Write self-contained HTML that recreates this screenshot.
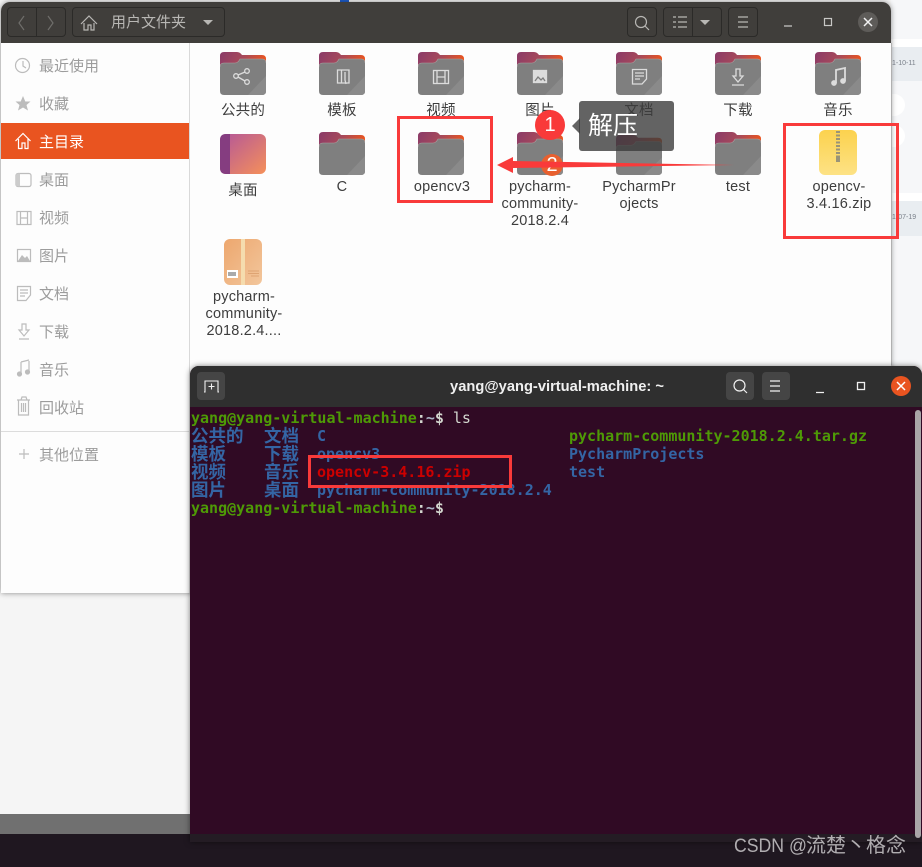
<!DOCTYPE html>
<html lang="zh"><head><meta charset="utf-8"><title>解压</title>
<style>
*{box-sizing:border-box}
html,body{margin:0;padding:0;width:922px;height:867px;overflow:hidden;background:#f5f5f5;font-family:"Liberation Sans","Noto Sans CJK SC",sans-serif}
.a{position:absolute}
#fm{left:1px;top:2px;width:890px;height:591px;background:#fdfdfd;border-radius:9px 9px 0 0;overflow:hidden;box-shadow:0 0 6px rgba(0,0,0,.45)}
.side{font-size:15px;color:#9c9c9c;left:38px;line-height:20px;white-space:nowrap}
.lab{font-size:14.5px;color:#3d3d3d;line-height:17px;text-align:center;width:96px;letter-spacing:.2px}
.term{font:bold 15px/18px "DejaVu Sans Mono","Noto Sans CJK SC",monospace;white-space:pre;position:absolute}
.cjk{font:bold 17.5px/18px "Noto Sans CJK SC",sans-serif;color:#3465a4;position:absolute;white-space:nowrap}
svg{position:absolute;overflow:visible}
</style></head><body>
<svg width="0" height="0" style="left:0;top:0"><defs>
<linearGradient id="fg" x1="0" y1="0" x2="1" y2="0.25"><stop offset="0" stop-color="#8a3a68"/><stop offset=".55" stop-color="#a84a5a"/><stop offset="1" stop-color="#e95420"/></linearGradient>
<linearGradient id="dg" x1="0" y1="0" x2="1" y2="1"><stop offset="0" stop-color="#b2559a"/><stop offset="1" stop-color="#f5905a"/></linearGradient>
<linearGradient id="zg" x1="0" y1="0" x2="0" y2="1"><stop offset="0" stop-color="#fcd24e"/><stop offset="1" stop-color="#fde285"/></linearGradient>
<linearGradient id="pg" x1="0" y1="0" x2="1" y2="1"><stop offset="0" stop-color="#eda76e"/><stop offset="1" stop-color="#f2c69c"/></linearGradient>
<symbol id="folder" viewBox="0 0 46 43">
<path d="M4 0H17Q20 0 22 3H42Q46 3 46 7V20H0V4Q0 0 4 0Z" fill="url(#fg)"/>
<path d="M0 15Q0 11 4 11H15Q18 11 20 7H42Q46 7 46 11V39Q46 43 42 43H4Q0 43 0 39Z" fill="#7f7f7f"/>
<path d="M46 24V39Q46 43 42 43H28Z" fill="#8a8a8a"/>
<path d="M0 15Q0 11 4 11H15Q18 11 20 7H42Q46 7 46 11" fill="none" stroke="#a8a2a2" stroke-width=".6"/>
</symbol></defs></svg>

<!-- background page strip -->
<div class="a" style="left:891px;top:0;width:31px;height:365px;background:#f6f7f9"></div>
<div class="a" style="left:891px;top:39px;width:31px;height:8px;background:#fff"></div>
<div class="a" style="left:891px;top:47px;width:31px;height:34px;background:#e9edf1"></div>
<div class="a" style="left:891px;top:193px;width:31px;height:8px;background:#fff"></div>
<div class="a" style="left:891px;top:201px;width:31px;height:35px;background:#e9edf1"></div>
<div class="a" style="left:892px;top:59px;font-size:7px;color:#7a808a;line-height:10px">1-10-11</div>
<div class="a" style="left:892px;top:213px;font-size:7px;color:#7a808a;line-height:10px">1-07-19</div>
<div class="a" style="left:891px;top:94px;width:14px;height:22px;background:#fff;border-radius:0 11px 11px 0"></div>
<div class="a" style="left:891px;top:125px;width:14px;height:22px;background:#fff;border-radius:0 11px 11px 0"></div>
<div class="a" style="left:340px;top:0;width:9px;height:3px;background:#1f5fd0"></div>
<div class="a" style="left:0;top:814px;width:922px;height:20px;background:#707070"></div>
<div class="a" style="left:0;top:834px;width:922px;height:33px;background:#1f1720"></div>

<!-- file manager -->
<div class="a" id="fm">
 <div class="a" style="left:0;top:0;width:890px;height:41px;background:#403e3b"></div>
 <div class="a" style="left:6px;top:5px;width:59px;height:30px;border:1px solid #2b2a28;border-radius:4px"></div>
 <div class="a" style="left:35px;top:5px;width:1px;height:30px;background:#2b2a28"></div>
 <svg style="left:0;top:0" width="890" height="41" fill="none" stroke="#8a8986" stroke-width="1.2">
  <path d="M23 14L18 21L23 28M47 14L52 21L47 28" stroke="#6f6e6b"/>
  <path d="M80 22L88 14L96 22M83 21V28H87V23H90V28H93V21" stroke="#b8b7b4"/>
  <path d="M202 18H212L207 23Z" fill="#b8b7b4" stroke="none"/>
  <circle cx="640" cy="20" r="5.5" stroke="#b8b7b4"/><path d="M644 24L648 28" stroke="#b8b7b4"/>
  <path d="M672 15H675M672 20H675M672 25H675M677 15H686M677 20H686M677 25H686" stroke="#b8b7b4"/>
  <path d="M699 18H709L704 23Z" fill="#b8b7b4" stroke="none"/>
  <path d="M737 15H747M737 20H747M737 25H747" stroke="#b8b7b4"/>
  <path d="M783 24H791" stroke="#c8c8c6"/>
  <rect x="823.5" y="16.5" width="7" height="7" stroke="#c8c8c6"/>
 </svg>
 <div class="a" style="left:71px;top:5px;width:153px;height:30px;border:1px solid #2b2a28;border-radius:4px"></div>
 <div class="a" style="left:110px;top:11px;font-size:15px;line-height:20px;color:#b8b7b4">用户文件夹</div>
 <div class="a" style="left:626px;top:5px;width:30px;height:30px;border:1px solid #2b2a28;border-radius:4px"></div>
 <div class="a" style="left:662px;top:5px;width:59px;height:30px;border:1px solid #2b2a28;border-radius:4px"></div>
 <div class="a" style="left:691px;top:5px;width:1px;height:30px;background:#2b2a28"></div>
 <div class="a" style="left:727px;top:5px;width:30px;height:30px;border:1px solid #2b2a28;border-radius:4px"></div>
 <div class="a" style="left:857px;top:10px;width:20px;height:20px;border-radius:50%;background:#5e5c59"></div>
 <svg style="left:857px;top:10px" width="20" height="20"><path d="M6 6L14 14M14 6L6 14" stroke="#f2f2f2" stroke-width="1.5"/></svg>

 <!-- sidebar -->
 <div class="a" style="left:188px;top:41px;width:1px;height:550px;background:#d9d9d9"></div>
 <div class="a" style="left:0;top:121px;width:188px;height:36px;background:#e95420"></div>
 <div class="a" style="left:0;top:429px;width:188px;height:1px;background:#dcdcdc"></div>
 <div class="a side" style="top:55px">最近使用</div>
 <div class="a side" style="top:93px">收藏</div>
 <div class="a side" style="top:131px;color:#fff">主目录</div>
 <div class="a side" style="top:169px">桌面</div>
 <div class="a side" style="top:207px">视频</div>
 <div class="a side" style="top:245px">图片</div>
 <div class="a side" style="top:283px">文档</div>
 <div class="a side" style="top:321px">下载</div>
 <div class="a side" style="top:359px">音乐</div>
 <div class="a side" style="top:397px">回收站</div>
 <div class="a side" style="top:444px">其他位置</div>
 <svg style="left:0;top:0" width="190" height="470" fill="none" stroke="#bcbcbc" stroke-width="1.2">
  <circle cx="21.500" cy="63.500" r="7"/><path d="M22 59V64L25 66"/>
  <path d="M22 94L24.300 99.500H29.500L25.500 103L27 108.500L22 105.500L17 108.500L18.500 103L14.500 99.500H19.700Z" fill="#bcbcbc" stroke="none"/>
  <path d="M14.500 139L22 131.500L29.500 139M17.500 137V146.500H21V141H24V146.500H27V137" stroke="#fff"/>
  <rect x="15" y="171.500" width="15" height="13" rx="2"/><path d="M15 173.500V183Q15 184.500 17 184.500H19V171.500H17Q15 171.500 15 173.500Z" fill="#ccc" stroke="none"/>
  <rect x="16" y="209.500" width="14" height="13"/><path d="M19.500 210V222M26.500 210V222M20 216H26"/>
  <rect x="16.500" y="247.500" width="13" height="12"/><path d="M17 259L21 253L24 256L26 254L29 259" fill="#bcbcbc" stroke="none"/>
  <path d="M16.500 284.500H29.500V293L25 298.500H16.500ZM19 288H27M19 291H27M19 294H24"/>
  <path d="M21 322H25V328H28L23 334L18 328H21ZM18 337H28"/>
  <path d="M20 360V372M28 359V370M20 360L28 358"/><circle cx="18.500" cy="372" r="2" fill="#bcbcbc"/><circle cx="26.500" cy="370" r="2" fill="#bcbcbc"/>
  <path d="M16 398H29M20 398L21 395H25L26 398M17.500 398V413H27.500V398M20.500 401V410M22.500 401V410M24.500 401V410"/>
  <path d="M23 447V457M18 452H28"/>
 </svg>
</div>
<div class="a" style="left:891px;top:43px;width:1px;height:322px;background:#b0b0b0"></div>

<!-- folders -->
<svg style="left:220px;top:52px" width="46" height="43"><use href="#folder"/></svg>
<svg style="left:319px;top:52px" width="46" height="43"><use href="#folder"/></svg>
<svg style="left:418px;top:52px" width="46" height="43"><use href="#folder"/></svg>
<svg style="left:517px;top:52px" width="46" height="43"><use href="#folder"/></svg>
<svg style="left:616px;top:52px" width="46" height="43"><use href="#folder"/></svg>
<svg style="left:715px;top:52px" width="46" height="43"><use href="#folder"/></svg>
<svg style="left:815px;top:52px" width="46" height="43"><use href="#folder"/></svg>
<svg style="left:319px;top:132px" width="46" height="43"><use href="#folder"/></svg>
<svg style="left:418px;top:132px" width="46" height="43"><use href="#folder"/></svg>
<svg style="left:517px;top:132px" width="46" height="43"><use href="#folder"/></svg>
<svg style="left:616px;top:135px" width="46" height="40" preserveAspectRatio="none" viewBox="0 0 46 43"><use href="#folder" width="46" height="43"/></svg>
<svg style="left:715px;top:132px" width="46" height="43"><use href="#folder"/></svg>
<!-- folder glyphs -->
<svg style="left:0;top:0" width="922" height="120" fill="none" stroke="#dcdcdc" stroke-width="1.300">
 <circle cx="236" cy="76" r="2.300"/><circle cx="247" cy="71" r="2.300"/><circle cx="247" cy="82" r="2.300"/><path d="M238 75L245 72M238 77L245 81"/>
 <path d="M337.500 70H349V83H337.500ZM341.500 70V83M345 72V80L346 84"/>
 <rect x="433.500" y="70.500" width="15" height="13"/><path d="M437 71V83M445 71V83M437 77H445"/>
 <rect x="533.500" y="70.500" width="13" height="12" fill="#dcdcdc"/><path d="M535 81L538 77L541 80L543 78L545 81" stroke="#7d7d7d"/>
 <path d="M632.500 69.500H646.500V79L642 84H632.500ZM635 73H644M635 76H644M635 79H640"/>
 <path d="M736 69H740V76H743L738 82L733 76H736ZM732 85H744"/>
 <path d="M836 83V70L845 68V81" stroke-width="1.800"/><circle cx="834" cy="83" r="2.200" fill="#dcdcdc"/><circle cx="843" cy="81" r="2.200" fill="#dcdcdc"/>
</svg>
<!-- desktop icon -->
<svg style="left:220px;top:134px" width="46" height="41"><rect width="46" height="40" rx="6" fill="url(#dg)"/><path d="M6 0H10V40H6Q0 40 0 34V6Q0 0 6 0Z" fill="#853d80"/></svg>
<!-- zip -->
<svg style="left:819px;top:130px" width="38" height="47"><rect width="38" height="45" rx="6" fill="url(#zg)"/><path d="M19 1V26" stroke="#9a9478" stroke-width="4" stroke-dasharray="2 1.500"/><rect x="17" y="26" width="4" height="6" fill="#9a9478"/></svg>
<!-- package -->
<svg style="left:224px;top:239px" width="38" height="47"><rect width="38" height="46" rx="6" fill="url(#pg)"/><rect x="17" width="4" height="46" fill="#f5dcae"/><rect x="3" y="31" width="11" height="8" fill="#fff"/><path d="M5 33V37M7 33V37M9 33V37M11 33V37" stroke="#555"/><path d="M24 32H35M24 34.500H35M27 37H35" stroke="#d89a68" stroke-width=".8"/></svg>

<!-- labels -->
<div class="a lab" style="left:195px;top:103px">公共的</div>
<div class="a lab" style="left:294px;top:103px">模板</div>
<div class="a lab" style="left:393px;top:103px">视频</div>
<div class="a lab" style="left:492px;top:103px">图片</div>
<div class="a lab" style="left:591px;top:103px">文档</div>
<div class="a lab" style="left:690px;top:103px">下载</div>
<div class="a lab" style="left:790px;top:103px">音乐</div>
<div class="a lab" style="left:195px;top:183px">桌面</div>
<div class="a lab" style="left:294px;top:179px">C</div>
<div class="a lab" style="left:394px;top:179px">opencv3</div>
<div class="a lab" style="left:492px;top:179px">pycharm-<br>community-<br>2018.2.4</div>
<div class="a lab" style="left:591px;top:179px">PycharmPr<br>ojects</div>
<div class="a lab" style="left:690px;top:179px">test</div>
<div class="a lab" style="left:791px;top:179px">opencv-<br>3.4.16.zip</div>
<div class="a lab" style="left:196px;top:289px">pycharm-<br>community-<br>2018.2.4....</div>

<!-- annotations -->
<div class="a" style="left:579px;top:101px;width:95px;height:50px;background:rgba(60,60,60,.8);border-radius:3px"></div>
<svg style="left:570px;top:118px" width="10" height="16"><path d="M10 0L2 8L10 16Z" fill="rgba(60,60,60,.8)"/></svg>
<div class="a" style="left:588px;top:110px;font-size:25px;line-height:32px;color:#fff;white-space:nowrap">解压</div>
<div class="a" style="left:535px;top:110px;width:30px;height:30px;border-radius:50%;background:#f93a3a;color:#fff;font-size:20px;line-height:30px;text-align:center">1</div>
<div class="a" style="left:541px;top:154px;width:22px;height:22px;border-radius:50%;background:#e8602f;color:#fff;font-size:20px;line-height:22px;text-align:center">2</div>
<div class="a" style="left:397px;top:116px;width:96px;height:87px;border:3px solid #f93a3a"></div>
<div class="a" style="left:783px;top:123px;width:116px;height:116px;border:3px solid #f93a3a"></div>
<svg style="left:0;top:0" width="922" height="200"><path d="M734 165L513 161V157L497 165L513 173V168Z" fill="#f93a3a"/></svg>

<!-- terminal -->
<div class="a" style="left:190px;top:366px;width:732px;height:476px;border-radius:9px 9px 0 0;overflow:hidden;background:#300a24;box-shadow:0 0 6px rgba(0,0,0,.5)">
 <div class="a" style="left:0;top:0;width:732px;height:41px;background:#2f2f2f"></div>
 <div class="a" style="left:7px;top:6px;width:28px;height:28px;border-radius:4px;background:#454545"></div>
 <svg style="left:7px;top:6px" width="28" height="28" fill="none" stroke="#f0f0f0" stroke-width="1.100"><path d="M7 20H8V9H21V20H22M14.500 11.500V17.500M11.500 14.500H17.500"/></svg>
 <div class="a" style="left:1px;top:11px;width:732px;text-align:center;font:bold 14.7px/20px 'Liberation Sans',sans-serif;color:#f0f0f0">yang@yang-virtual-machine: ~</div>
 <div class="a" style="left:536px;top:6px;width:28px;height:28px;border-radius:4px;background:#454545"></div>
 <div class="a" style="left:572px;top:6px;width:28px;height:28px;border-radius:4px;background:#454545"></div>
 <svg style="left:536px;top:6px" width="200" height="28" fill="none" stroke="#f0f0f0" stroke-width="1.200"><circle cx="13.500" cy="13.500" r="5.500"/><path d="M17.500 17.500L21 21M44 9H54M44 14H54M44 19H54M90 20.500H98"/><rect x="131.500" y="10.500" width="7" height="7" stroke-width="1.300"/></svg>
 <div class="a" style="left:701px;top:10px;width:20px;height:20px;border-radius:50%;background:#e95420"></div>
 <svg style="left:701px;top:10px" width="20" height="20"><path d="M6 6L14 14M14 6L6 14" stroke="#fff" stroke-width="1.500"/></svg>
 <div class="a" style="left:0;top:468px;width:732px;height:8px;background:#241c24"></div>
 <div class="a" style="left:725px;top:44px;width:6px;height:428px;border-radius:3px;background:#a9a5a7"></div>
</div>

<div class="term" style="left:191px;top:409px;color:#4e9a06">yang@yang-virtual-machine<span style="color:#d3d7cf">:</span><span style="color:#a9b4c4">~</span><span style="color:#d3d7cf">$ </span><span style="color:#d3d7cf;font-weight:normal">ls</span></div>
<div class="cjk" style="left:191px;top:427px">公共的</div><div class="cjk" style="left:264px;top:427px">文档</div>
<div class="cjk" style="left:191px;top:445px">模板</div><div class="cjk" style="left:264px;top:445px">下载</div>
<div class="cjk" style="left:191px;top:463px">视频</div><div class="cjk" style="left:264px;top:463px">音乐</div>
<div class="cjk" style="left:191px;top:481px">图片</div><div class="cjk" style="left:264px;top:481px">桌面</div>
<div class="term" style="left:317px;top:427px;color:#3465a4">C</div>
<div class="term" style="left:317px;top:445px;color:#3465a4">opencv3</div>
<div class="term" style="left:317px;top:463px;color:#cc0000">opencv-3.4.16.zip</div>
<div class="term" style="left:317px;top:481px;color:#3465a4">pycharm-community-2018.2.4</div>
<div class="term" style="left:569px;top:427px;color:#4e9a06">pycharm-community-2018.2.4.tar.gz</div>
<div class="term" style="left:569px;top:445px;color:#3465a4">PycharmProjects</div>
<div class="term" style="left:569px;top:463px;color:#3465a4">test</div>
<div class="term" style="left:191px;top:499px;color:#4e9a06">yang@yang-virtual-machine<span style="color:#d3d7cf">:</span><span style="color:#a9b4c4">~</span><span style="color:#d3d7cf">$</span></div>
<div class="a" style="left:308px;top:455px;width:204px;height:33px;border:3px solid #f93a3a"></div>

<div class="a" style="left:734px;top:834px;font-size:19px;line-height:25px;color:#b0adb0;white-space:nowrap;transform-origin:0 50%;transform:scaleX(.93)">CSDN @</div>
<div class="a" style="left:806px;top:834px;font-size:20px;line-height:25px;color:#b0adb0;white-space:nowrap">流楚丶格念</div>
</body></html>
